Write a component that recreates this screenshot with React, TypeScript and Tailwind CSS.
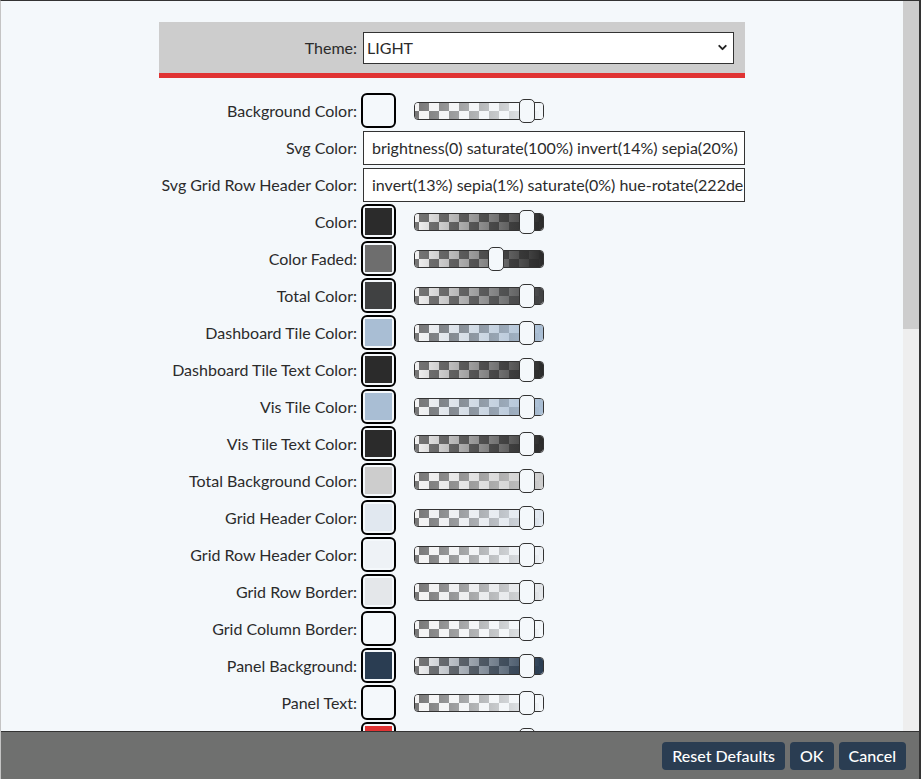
import React from "react";
import { ChevronDown } from "lucide-react";

type Row = {
  label: string;
  color?: string;
  grad?: string;
  alpha?: number;
  text?: string;
};

const rows: Row[] = [
  { label: "Background Color:", color: "#f4f8fb" },
  { label: "Svg Color:", text: "brightness(0) saturate(100%) invert(14%) sepia(20%)" },
  {
    label: "Svg Grid Row Header Color:",
    text: "invert(13%) sepia(1%) saturate(0%) hue-rotate(222de",
  },
  { label: "Color:", color: "#2b2b2b" },
  { label: "Color Faded:", color: "#6e6e6e", grad: "#2b2b2b", alpha: 0.7 },
  { label: "Total Color:", color: "#404142" },
  { label: "Dashboard Tile Color:", color: "#a9bed4" },
  { label: "Dashboard Tile Text Color:", color: "#2b2b2b" },
  { label: "Vis Tile Color:", color: "#a9bed4" },
  { label: "Vis Tile Text Color:", color: "#2b2b2b" },
  { label: "Total Background Color:", color: "#cdcdcd" },
  { label: "Grid Header Color:", color: "#e1e8f0" },
  { label: "Grid Row Header Color:", color: "#eef2f6" },
  { label: "Grid Row Border:", color: "#e4e7ea" },
  { label: "Grid Column Border:", color: "#f4f8fb" },
  { label: "Panel Background:", color: "#2a3d52" },
  { label: "Panel Text:", color: "#f4f8fb" },
  { label: "", color: "#e03333" },
];

function Slider({ color, alpha }: { color: string; alpha: number }) {
  return (
    <div className="relative ml-[18px] h-[18px] w-[130px] rounded-[4px] border border-[#333]">
      <div className="h-full w-full overflow-hidden rounded-[3px] bg-[repeating-conic-gradient(#767676_0_25%,#f4f4f4_0_50%)] bg-[length:20px_16px] bg-[position:-6px_0]">
        <div
          className="h-full w-full"
          style={{ backgroundImage: `linear-gradient(to right, transparent, ${color})` }}
        />
      </div>
      <div
        className="absolute top-[-4px] h-6 w-4 rounded-[5px] border-[1.5px] border-[#333] bg-[#f4f8fb]"
        style={{ left: `${Math.round(105 * alpha) - 1}px` }}
      />
    </div>
  );
}

export default function App() {
  return (
    <div className="flex h-[779px] w-[921px] flex-col overflow-hidden border-t border-r-2 border-l border-t-[#333] border-r-[#333] border-l-[#c4c4c4] bg-[#f4f8fb] font-['Lato',sans-serif] text-[16px] text-[#2b2b2b]">
      <div className="flex min-h-0 flex-1">
        <div className="min-w-0 flex-1 overflow-hidden pt-[21px]">
          <div className="mx-auto w-[586px]">
            <div className="grid h-[56px] grid-cols-[198px_1fr] items-center gap-x-[6px] border-b-[5px] border-[#e03333] bg-[#cdcdcd] pr-[11px]">
              <div className="text-right whitespace-nowrap">Theme:</div>
              <div className="flex h-[32px] items-center justify-between border border-[#333] bg-white pr-[4px] pl-[3px]">
                <span>LIGHT</span>
                <ChevronDown size={13} strokeWidth={3.5} className="text-[#222]" />
              </div>
            </div>
            <div className="mt-[14px]">
              {rows.map((r, i) => (
                <div key={i} className="grid h-[37px] grid-cols-[198px_1fr] items-center gap-x-1">
                  <div className="text-right whitespace-nowrap">{r.label}</div>
                  {r.text ? (
                    <div className="ml-0.5 h-[34px] overflow-hidden border border-[#333] bg-white px-2 leading-[32px] whitespace-nowrap">
                      {r.text}
                    </div>
                  ) : (
                    <div className="flex items-center">
                      <div className="h-[35px] w-[35px] rounded-[6px] border-2 border-black bg-[#f4f8fb] p-[2px]">
                        <div className="h-full w-full" style={{ backgroundColor: r.color }} />
                      </div>
                      <Slider color={r.grad ?? r.color ?? "#000"} alpha={r.alpha ?? 1} />
                    </div>
                  )}
                </div>
              ))}
            </div>
          </div>
        </div>
        <div className="flex w-4 flex-col bg-[#eeeeee]">
          <div className="h-[328px] bg-[#cdcdcd]" />
        </div>
      </div>
      <div className="flex h-[48px] shrink-0 items-center justify-end gap-[5px] border-t border-[#333] bg-[#6f706f] pt-[1px] pr-[13px]">
        <button className="h-[28px] rounded-[4px] bg-[#2a3d52] px-[10px] text-[16px] font-medium text-white">
          Reset Defaults
        </button>
        <button className="h-[28px] rounded-[4px] bg-[#2a3d52] px-[10px] text-[16px] font-medium text-white">
          OK
        </button>
        <button className="h-[28px] rounded-[4px] bg-[#2a3d52] px-[10px] text-[16px] font-medium text-white">
          Cancel
        </button>
      </div>
    </div>
  );
}
